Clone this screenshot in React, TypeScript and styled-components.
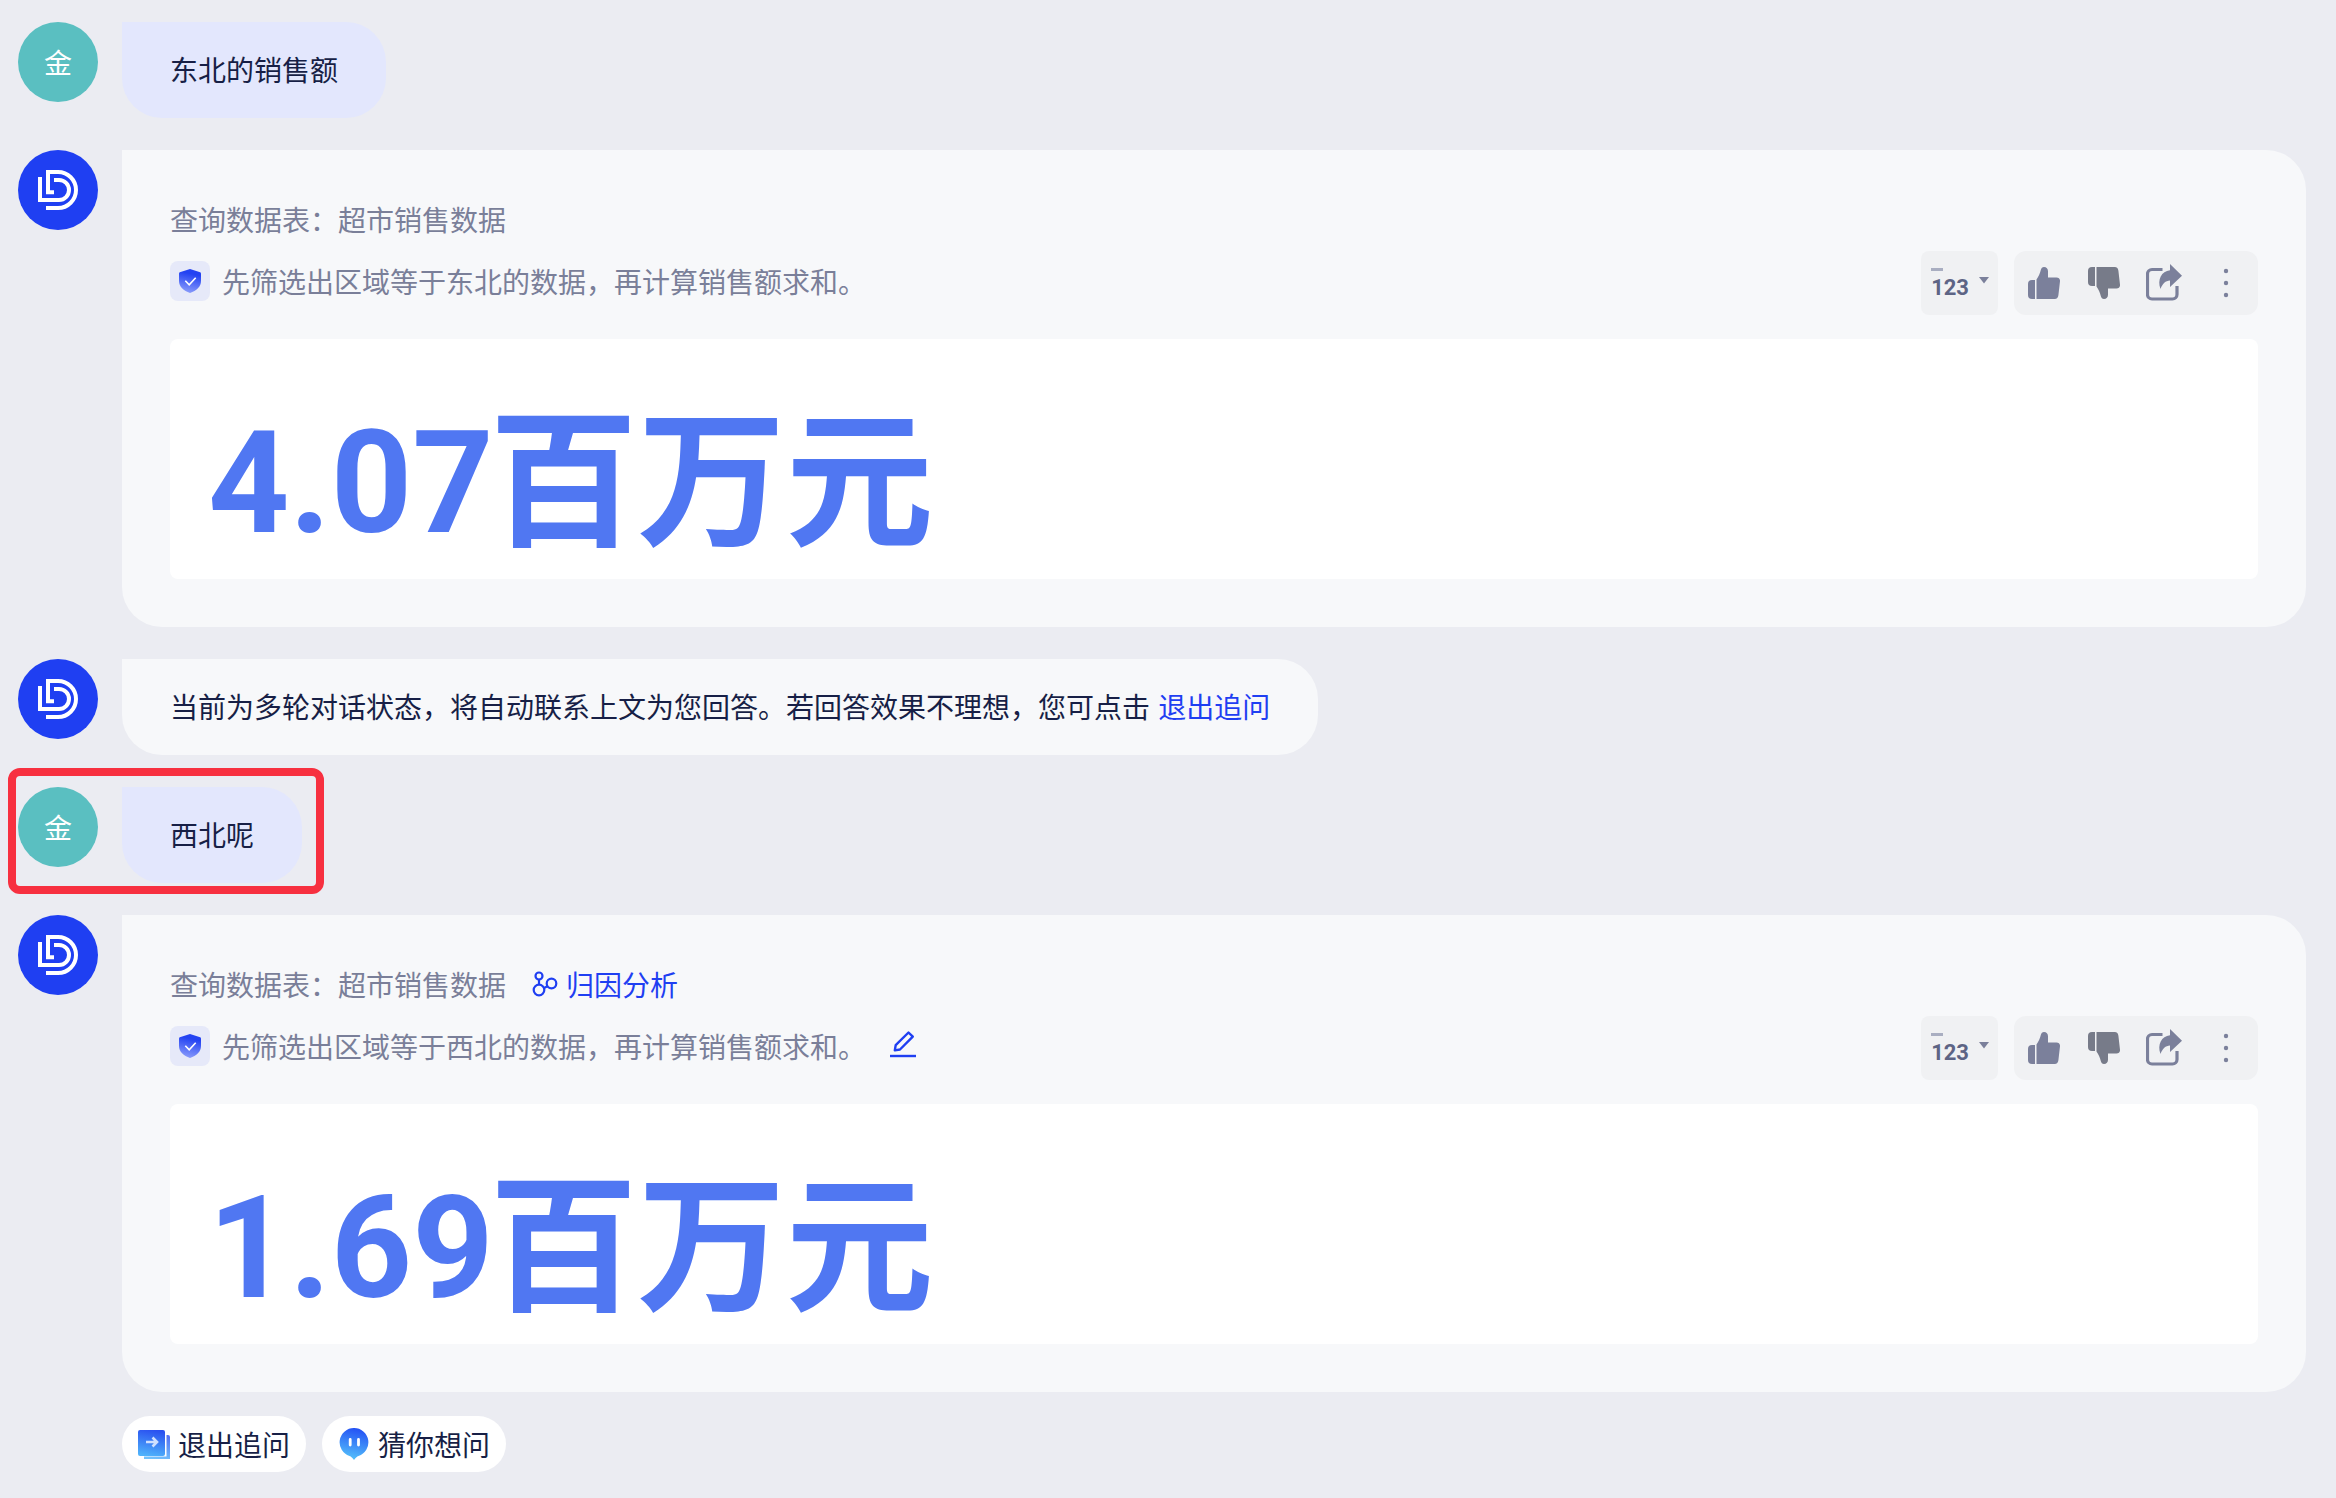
import React from "react";
import styled, { createGlobalStyle } from "styled-components";

const GlobalStyle = createGlobalStyle`
  *, *::before, *::after { box-sizing: border-box; }
  body {
    margin: 0;
    background: #ebecf2;
    color: #171f46;
    font-family: "Noto Sans CJK SC", sans-serif;
    font-size: 28px;
    line-height: 44px;
  }
  button { font: inherit; color: inherit; border: 0; margin: 0; cursor: pointer; }
  svg { display: block; flex: none; }
`;

const Conversation = styled.main`
  display: flex;
  flex-direction: column;
  gap: 32px;
  padding: 22px 30px 26px 18px;
`;

const MessageRow = styled.article<{ $marked?: boolean }>`
  position: relative;
  display: flex;
  align-items: flex-start;
  gap: 24px;
  ${(p) => p.$marked && `
    align-self: flex-start;
    &::after {
      content: "";
      position: absolute;
      inset: -19px -22px -11px -10px;
      border: 8px solid #f73040;
      border-radius: 12px;
      pointer-events: none;
    }
  `}
`;

const Avatar = styled.div<{ $bot?: boolean }>`
  flex: none;
  display: flex;
  align-items: center;
  justify-content: center;
  width: 80px;
  height: 80px;
  border-radius: 50%;
  color: #fff;
  background: ${(p) => (p.$bot ? "#1f3ff2" : "#5abfc1")};
`;

const Bubble = styled.p<{ $mine?: boolean }>`
  margin: 0;
  padding: 25px 48px 27px;
  border-radius: 0 40px 40px 40px;
  background: ${(p) => (p.$mine ? "#e3e7fd" : "#f7f8fa")};
`;

const TextLink = styled.a`
  margin-left: 2px;
  color: #1f3ff2;
  text-decoration: none;
`;

const AnswerColumn = styled.div`
  flex: 1;
  min-width: 0;
  display: flex;
  flex-direction: column;
  gap: 24px;
`;

const AnswerCard = styled.section`
  padding: 48px;
  border-radius: 0 40px 40px 40px;
  background: #f7f8fa;
`;

const SourceLine = styled.div`
  display: flex;
  align-items: center;
  gap: 24px;
  height: 42px;
  color: #7a7f99;
`;

const AnalysisLink = styled(TextLink)`
  display: flex;
  align-items: center;
  gap: 8px;
`;

const ExplainRow = styled.div`
  display: flex;
  align-items: flex-start;
  justify-content: space-between;
  margin: 11px 0 24px;
`;

const Explain = styled.div`
  display: flex;
  align-items: center;
  gap: 12px;
  height: 60px;
  color: #7a7f99;
`;

const ShieldBadge = styled.span`
  display: flex;
  align-items: center;
  justify-content: center;
  width: 40px;
  height: 40px;
  border-radius: 8px;
  background: #e6e9f9;
`;

const EditButton = styled.button`
  display: flex;
  margin-left: 12px;
  padding: 0 0 4px;
  background: none;
`;

const Tools = styled.div`
  display: flex;
  gap: 16px;
`;

const FormatButton = styled.button`
  display: flex;
  align-items: center;
  gap: 10px;
  height: 64px;
  padding: 0 9px 0 10px;
  border-radius: 8px;
  background: #f0f1f3;
`;

const FormatLabel = styled.span`
  display: flex;
  flex-direction: column;
  gap: 6px;
  color: #5d6485;
  font: 700 22px/22px Roboto, sans-serif;

  &::before {
    content: "";
    width: 12px;
    height: 3px;
    background: #a9aec1;
  }
`;

const ToolGroup = styled.div`
  display: grid;
  grid-template-columns: 60px 60px 60px 64px;
  height: 64px;
  border-radius: 12px;
  background: #f0f1f3;
`;

const ToolButton = styled.button`
  display: flex;
  align-items: center;
  justify-content: center;
  padding: 0;
  background: none;
`;

const ValuePanel = styled.div`
  display: flex;
  align-items: flex-start;
  gap: 0;
  height: 240px;
  padding: 32px 38px;
  border-radius: 8px;
  background: #fff;
  color: #5077f2;
`;

const Value = styled.strong`
  font: 700 142px/226px Roboto, sans-serif;
`;

const Unit = styled.span`
  margin-left: -4px;
  font: 700 148px/198px "Noto Sans CJK SC", sans-serif;
`;

const Suggestions = styled.div`
  display: flex;
  gap: 16px;
`;

const Chip = styled.button`
  display: flex;
  align-items: center;
  gap: 8px;
  height: 56px;
  padding: 0 16px;
  border-radius: 28px;
  background: #fff;
`;

const BotLogo = () => (
  <svg width="80" height="80" viewBox="0 0 80 80" fill="none" stroke="#fff" strokeWidth="4" aria-hidden="true">
    <path d="M36 42.3H30V22H40a18 18 0 0 1 0 36H28" />
    <path d="M36 30h5a10 10 0 0 1 0 20H22V27" />
  </svg>
);

const ShieldIcon = () => (
  <svg width="22" height="24" viewBox="0 0 22 24" aria-hidden="true">
    <defs>
      <linearGradient id="shield" x1="0.6" y1="0" x2="0.4" y2="1">
        <stop offset="0.2" stopColor="#2443f2" />
        <stop offset="1" stopColor="#8a9cfb" />
      </linearGradient>
    </defs>
    <path d="M11 0l10.200 3.300c.5.2.8.6.8 1.200V12c0 5.800-4.500 9.500-11 12C4.500 21.500 0 17.800 0 12V4.500c0-.6.3-1 .8-1.200z" fill="url(#shield)" />
    <path d="M6.300 11.800l3.900 4 6.500-7" fill="none" stroke="#fff" strokeWidth="1.600" />
  </svg>
);

const ThumbIcon = ({ down = false }: { down?: boolean }) => (
  <svg width="32" height="32" viewBox="0 0 32 32" fill={down ? "#777b89" : "#7b809b"} aria-hidden="true">
    <g transform={down ? "matrix(1 0 0 -1 0 32)" : undefined}>
      <path d="M4 13h3v19H4a4 4 0 0 1-4-4V17a4 4 0 0 1 4-4z" />
      <path d="M8.500 32V12.500C10.500 9.500 12 6.500 12.800 3c.5-2 1.500-3 3.200-3 2.500 0 4 1.800 4 4.300v6.200h8.500c2.300 0 3.700 1.500 3.500 3.800l-1.600 14c-.3 2.400-1.500 3.700-3.600 3.700z" />
    </g>
  </svg>
);

const ShareIcon = () => (
  <svg width="36" height="38" viewBox="0 0 36 38" aria-hidden="true">
    <path d="M16.500 5.500H6A4.500 4.500 0 0 0 1.500 10v20.500A4.500 4.500 0 0 0 6 35h20.500a4.500 4.500 0 0 0 4.500-4.500V22" fill="none" stroke="#7b809b" strokeWidth="3.200" />
    <path d="M24 0l12 11.800L24 23v-6.500c-4.500.3-7.500 3-9.500 8.500-3.500-9.500 1-18 9.500-18.800z" fill="#7b809b" />
  </svg>
);

const MoreIcon = () => (
  <svg width="32" height="32" viewBox="0 0 32 32" fill="#7b809b" aria-hidden="true">
    <circle cx="16" cy="4" r="2.200" />
    <circle cx="16" cy="16" r="2.200" />
    <circle cx="16" cy="28" r="2.200" />
  </svg>
);

const CaretIcon = () => (
  <svg width="10" height="16" viewBox="0 0 10 16" aria-hidden="true">
    <path d="M0 2h10L5 8.500z" fill="#7b809b" />
  </svg>
);

const NodesIcon = () => (
  <svg width="26" height="26" viewBox="0 0 26 26" fill="none" stroke="#1f3ff2" strokeWidth="2.200" aria-hidden="true">
    <circle cx="7" cy="5" r="3.500" />
    <circle cx="7" cy="19" r="5.300" />
    <circle cx="19.500" cy="12.500" r="4.800" />
    <path d="M7 8.500v5M12 17l4-2" />
  </svg>
);

const PencilIcon = () => (
  <svg width="26" height="28" viewBox="0 0 26 28" fill="none" stroke="#1f3ff2" strokeWidth="2.400" aria-hidden="true">
    <path d="M18.500 2.500l4.300 4.200L10 19.500l-5.200.9.900-5.300z" strokeLinejoin="round" />
    <path d="M0 26h26" />
  </svg>
);

const ExitIcon = () => (
  <svg width="32" height="32" viewBox="0 0 32 32" aria-hidden="true">
    <defs>
      <linearGradient id="exit" x1="0.600" y1="0" x2="0.400" y2="1">
        <stop offset="0" stopColor="#2a50f0" />
        <stop offset="1" stopColor="#4fb2fb" />
      </linearGradient>
    </defs>
    <path d="M28.500 7H30a2 2 0 0 1 2 2v22H6v-2.500h22.500z" fill="url(#exit)" opacity="0.800" />
    <rect y="2" width="27" height="26" rx="2" fill="url(#exit)" />
    <path d="M8 14h10M14.500 9.500l4.500 4.500-4.500 4.500" fill="none" stroke="#cfe0ff" strokeWidth="2.600" />
  </svg>
);

const GuessIcon = () => (
  <svg width="32" height="32" viewBox="0 0 32 32" aria-hidden="true">
    <defs>
      <linearGradient id="guess" x1="0.600" y1="0" x2="0.400" y2="1">
        <stop offset="0" stopColor="#2450f4" />
        <stop offset="1" stopColor="#55c3fb" />
      </linearGradient>
    </defs>
    <path d="M16 0a14.300 14.300 0 0 1 4.500 27.900c-1.800.6-2.800 1.900-4.500 4.100-1.700-2.200-2.700-3.500-4.500-4.100A14.300 14.300 0 0 1 16 0z" fill="url(#guess)" />
    <path d="M12.200 11.500v5.500M20.500 11.500v5.500" stroke="#fff" strokeWidth="2.800" strokeLinecap="round" />
  </svg>
);

const BotAvatar = () => (
  <Avatar $bot role="img" aria-label="机器人">
    <BotLogo />
  </Avatar>
);

const UserMessage = ({ text, marked }: { text: string; marked?: boolean }) => (
  <MessageRow $marked={marked}>
    <Avatar>金</Avatar>
    <Bubble $mine>{text}</Bubble>
  </MessageRow>
);

interface AnswerProps {
  region: string;
  value: string;
  latest?: boolean;
}

const Answer = ({ region, value, latest }: AnswerProps) => (
  <AnswerCard>
    <SourceLine>
      <span>查询数据表：超市销售数据</span>
      {latest && (
        <AnalysisLink href="#analysis">
          <NodesIcon />
          归因分析
        </AnalysisLink>
      )}
    </SourceLine>
    <ExplainRow>
      <Explain>
        <ShieldBadge>
          <ShieldIcon />
        </ShieldBadge>
        <span>先筛选出区域等于{region}的数据，再计算销售额求和。</span>
        {latest && (
          <EditButton aria-label="编辑">
            <PencilIcon />
          </EditButton>
        )}
      </Explain>
      <Tools>
        <FormatButton aria-label="数值格式">
          <FormatLabel>123</FormatLabel>
          <CaretIcon />
        </FormatButton>
        <ToolGroup>
          <ToolButton aria-label="赞"><ThumbIcon /></ToolButton>
          <ToolButton aria-label="踩"><ThumbIcon down /></ToolButton>
          <ToolButton aria-label="分享"><ShareIcon /></ToolButton>
          <ToolButton aria-label="更多"><MoreIcon /></ToolButton>
        </ToolGroup>
      </Tools>
    </ExplainRow>
    <ValuePanel>
      <Value>{value}</Value>
      <Unit>百万元</Unit>
    </ValuePanel>
  </AnswerCard>
);

export default function App() {
  return (
    <>
      <GlobalStyle />
      <Conversation>
        <UserMessage text="东北的销售额" />
        <MessageRow>
          <BotAvatar />
          <AnswerColumn>
            <Answer region="东北" value="4.07" />
          </AnswerColumn>
        </MessageRow>
        <MessageRow>
          <BotAvatar />
          <Bubble>
            当前为多轮对话状态，将自动联系上文为您回答。若回答效果不理想，您可点击 <TextLink href="#exit">退出追问</TextLink>
          </Bubble>
        </MessageRow>
        <UserMessage text="西北呢" marked />
        <MessageRow>
          <BotAvatar />
          <AnswerColumn>
            <Answer region="西北" value="1.69" latest />
            <Suggestions>
              <Chip><ExitIcon />退出追问</Chip>
              <Chip><GuessIcon />猜你想问</Chip>
            </Suggestions>
          </AnswerColumn>
        </MessageRow>
      </Conversation>
    </>
  );
}
